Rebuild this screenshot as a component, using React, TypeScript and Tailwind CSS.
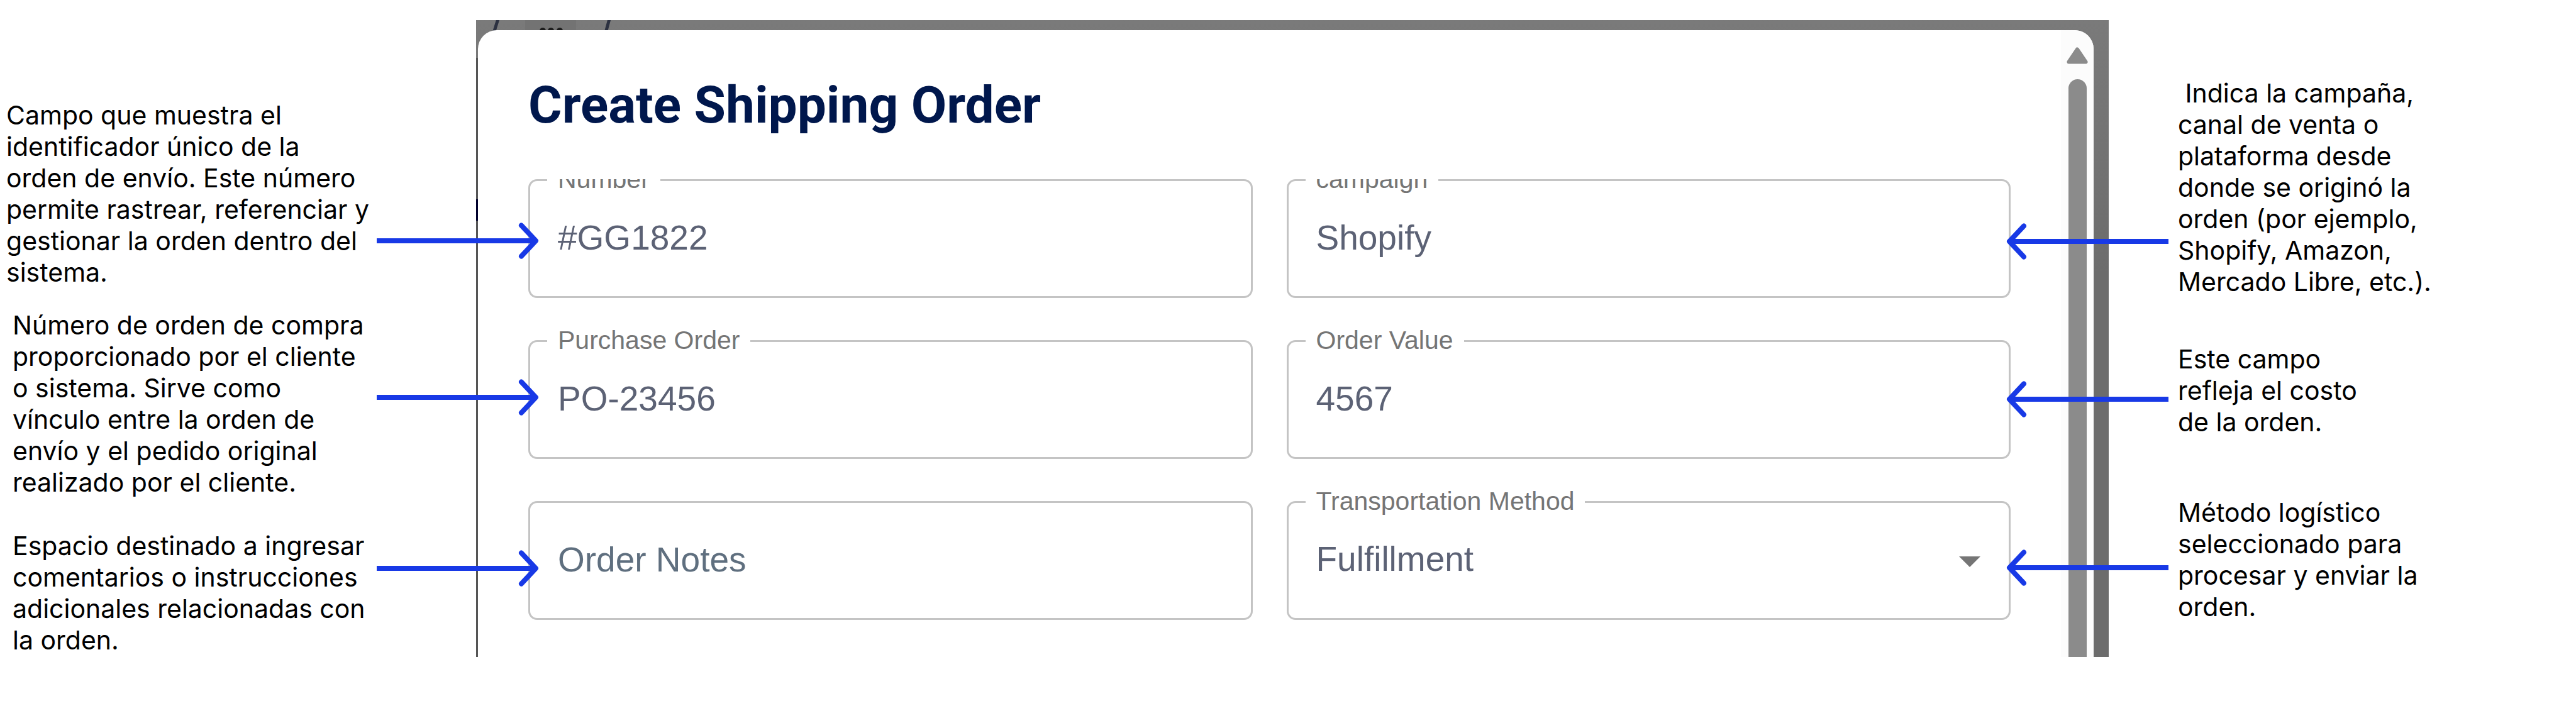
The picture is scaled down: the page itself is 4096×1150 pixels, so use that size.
import { useId, type ReactNode } from "react";

type Note = { lines: string[]; className: string; arrow: string };

const leftNotes: Note[] = [
  {
    lines: [
      "Campo que muestra el",
      "identificador único de la",
      "orden de envío. Este número",
      "permite rastrear, referenciar y",
      "gestionar la orden dentro del",
      "sistema.",
    ],
    className: "pl-[10px]",
    arrow: "top-[195px]",
  },
  {
    lines: [
      "Número de orden de compra",
      "proporcionado por el cliente",
      "o sistema. Sirve como",
      "vínculo entre la orden de",
      "envío y el pedido original",
      "realizado por el cliente.",
    ],
    className: "mt-[34px] pl-[20px]",
    arrow: "top-[110px]",
  },
  {
    lines: [
      "Espacio destinado a ingresar",
      "comentarios o instrucciones",
      "adicionales relacionadas con",
      "la orden.",
    ],
    className: "mt-[51px] pl-[20px]",
    arrow: "top-[31px]",
  },
];

const rightNotes: Note[] = [
  {
    lines: [
      " Indica la campaña,",
      "canal de venta o",
      "plataforma desde",
      "donde se originó la",
      "orden (por ejemplo,",
      "Shopify, Amazon,",
      "Mercado Libre, etc.).",
    ],
    className: "",
    arrow: "top-[231px]",
  },
  {
    lines: ["Este campo", "refleja el costo", "de la orden."],
    className: "mt-[73px]",
    arrow: "top-[59px]",
  },
  {
    lines: ["Método logístico", "seleccionado para", "procesar y enviar la", "orden."],
    className: "mt-[94px]",
    arrow: "top-[83px]",
  },
];

function Arrow({ direction, className }: { direction: "left" | "right"; className: string }) {
  return (
    <svg
      viewBox="0 0 258 60"
      aria-hidden="true"
      className={`absolute z-10 h-[60px] w-[258px] ${className}`}
      fill="none"
      stroke="#1839e6"
      strokeWidth="8"
      strokeLinejoin="round"
    >
      {direction === "right" ? (
        <>
          <path d="M0 30H253" />
          <path d="M230 5.500L253 30L230 54.500" strokeLinecap="round" />
        </>
      ) : (
        <>
          <path d="M258 30H5" />
          <path d="M28 5.500L5 30L28 54.500" strokeLinecap="round" />
        </>
      )}
    </svg>
  );
}

function NoteText({ lines }: { lines: string[] }) {
  return (
    <p className="whitespace-pre font-['Inter',sans-serif] text-[41px] leading-[50px] text-black">
      {lines.join("\n")}
    </p>
  );
}

function Outline({ id, label, children }: { id: string; label: string; children: ReactNode }) {
  return (
    <fieldset className="min-w-0 rounded-[14px] border-[3px] border-[#c4c4c4]">
      <legend className="ml-[27px] px-[17px] pb-[2px] text-[41px] leading-[45px] text-[#757575]">
        <label htmlFor={id}>{label}</label>
      </legend>
      <div className="relative -mt-[22px]">{children}</div>
    </fieldset>
  );
}

const controlClass =
  "block h-[183px] w-full appearance-none bg-transparent px-[44px] pb-[4px] text-[55px] text-[#5c6275] outline-none placeholder:text-[#5f6f7f] placeholder:opacity-100";

function TextField({ label, value }: { label: string; value: string }) {
  const id = useId();
  return (
    <Outline id={id} label={label}>
      <input id={id} type="text" defaultValue={value} className={controlClass} />
    </Outline>
  );
}

function SelectField({ label, value }: { label: string; value: string }) {
  const id = useId();
  return (
    <Outline id={id} label={label}>
      <select id={id} defaultValue={value} className={controlClass}>
        <option>{value}</option>
      </select>
      <svg
        viewBox="0 0 34 17"
        aria-hidden="true"
        className="pointer-events-none absolute top-[85px] right-[45px] h-[17px] w-[34px]"
      >
        <path d="M0 0H34L17 17Z" fill="#757575" />
      </svg>
    </Outline>
  );
}

function ShippingDialog() {
  return (
    <div className="relative mt-[32px] self-start overflow-hidden bg-linear-to-b from-[#7a7a7a] to-[#6c6c6c] to-40% pt-[16px] pr-[24px] pl-[3px]">
      <svg
        viewBox="0 0 300 24"
        aria-hidden="true"
        className="absolute top-0 left-0 h-[24px] w-[300px]"
      >
        <rect x="78" width="81" height="24" fill="#737373" />
        <path d="M35 -2L27 24M212 -2L205 24" stroke="#2c3140" strokeWidth="5" />
        <g fill="#1c1c1c">
          <circle cx="106" cy="17" r="5" />
          <circle cx="119" cy="17" r="5" />
          <circle cx="133" cy="17" r="5" />
        </g>
      </svg>
      <div className="absolute top-[60px] bottom-0 left-0 w-[3px] bg-[#555]" />
      <div className="absolute top-[285px] left-0 h-[34px] w-[3px] bg-[#00002c]" />

      <section
        role="dialog"
        aria-labelledby="dialog-title"
        className="relative flex overflow-hidden rounded-t-[30px] bg-white"
      >
        <div className="min-w-0 flex-1">
          <h1
            id="dialog-title"
            className="px-[80px] pt-[64px] pb-[63px] font-['Roboto',sans-serif] text-[82px] leading-[110px] font-bold text-[#00174c]"
          >
            Create Shipping Order
          </h1>
          <div className="overflow-hidden">
            <form className="-mt-[22px] grid grid-cols-2 gap-x-[54px] gap-y-[45px] px-[80px] pb-[59px] font-['Liberation_Sans',sans-serif]">
              <TextField label="Number" value="#GG1822" />
              <TextField label="campaign" value="Shopify" />
              <TextField label="Purchase Order" value="PO-23456" />
              <TextField label="Order Value" value="4567" />
              <div className="mt-[22px] rounded-[14px] border-[3px] border-[#c4c4c4]">
                <input
                  type="text"
                  aria-label="Order Notes"
                  placeholder="Order Notes"
                  className={controlClass}
                />
              </div>
              <SelectField label="Transportation Method" value="Fulfillment" />
            </form>
          </div>
        </div>
        <div className="flex w-[52px] flex-col items-center bg-[#fcfcfc] pt-[27px]" aria-hidden="true">
          <svg viewBox="0 0 34 27" className="h-[27px] w-[34px]">
            <path
              d="M17 3.500L30.500 23.500H3.500Z"
              fill="#8b8b8b"
              stroke="#8b8b8b"
              strokeWidth="6"
              strokeLinejoin="round"
            />
          </svg>
          <div className="mt-[24px] w-[29px] flex-1 rounded-t-[15px] bg-[#8b8b8b]" />
        </div>
      </section>
    </div>
  );
}

export default function App() {
  return (
    <main className="grid min-h-screen grid-cols-[minmax(0,757fr)_minmax(0,2596fr)_minmax(0,743fr)] bg-white">
      <aside className="pt-[158px]">
        {leftNotes.map((note) => (
          <div key={note.lines[0]} className={`relative ${note.className}`}>
            <NoteText lines={note.lines} />
            <Arrow direction="right" className={`-right-[100px] ${note.arrow}`} />
          </div>
        ))}
      </aside>
      <ShippingDialog />
      <aside className="pt-[123px]">
        {rightNotes.map((note) => (
          <div key={note.lines[0]} className={`relative pl-[110px] ${note.className}`}>
            <NoteText lines={note.lines} />
            <Arrow direction="left" className={`-left-[163px] ${note.arrow}`} />
          </div>
        ))}
      </aside>
    </main>
  );
}
